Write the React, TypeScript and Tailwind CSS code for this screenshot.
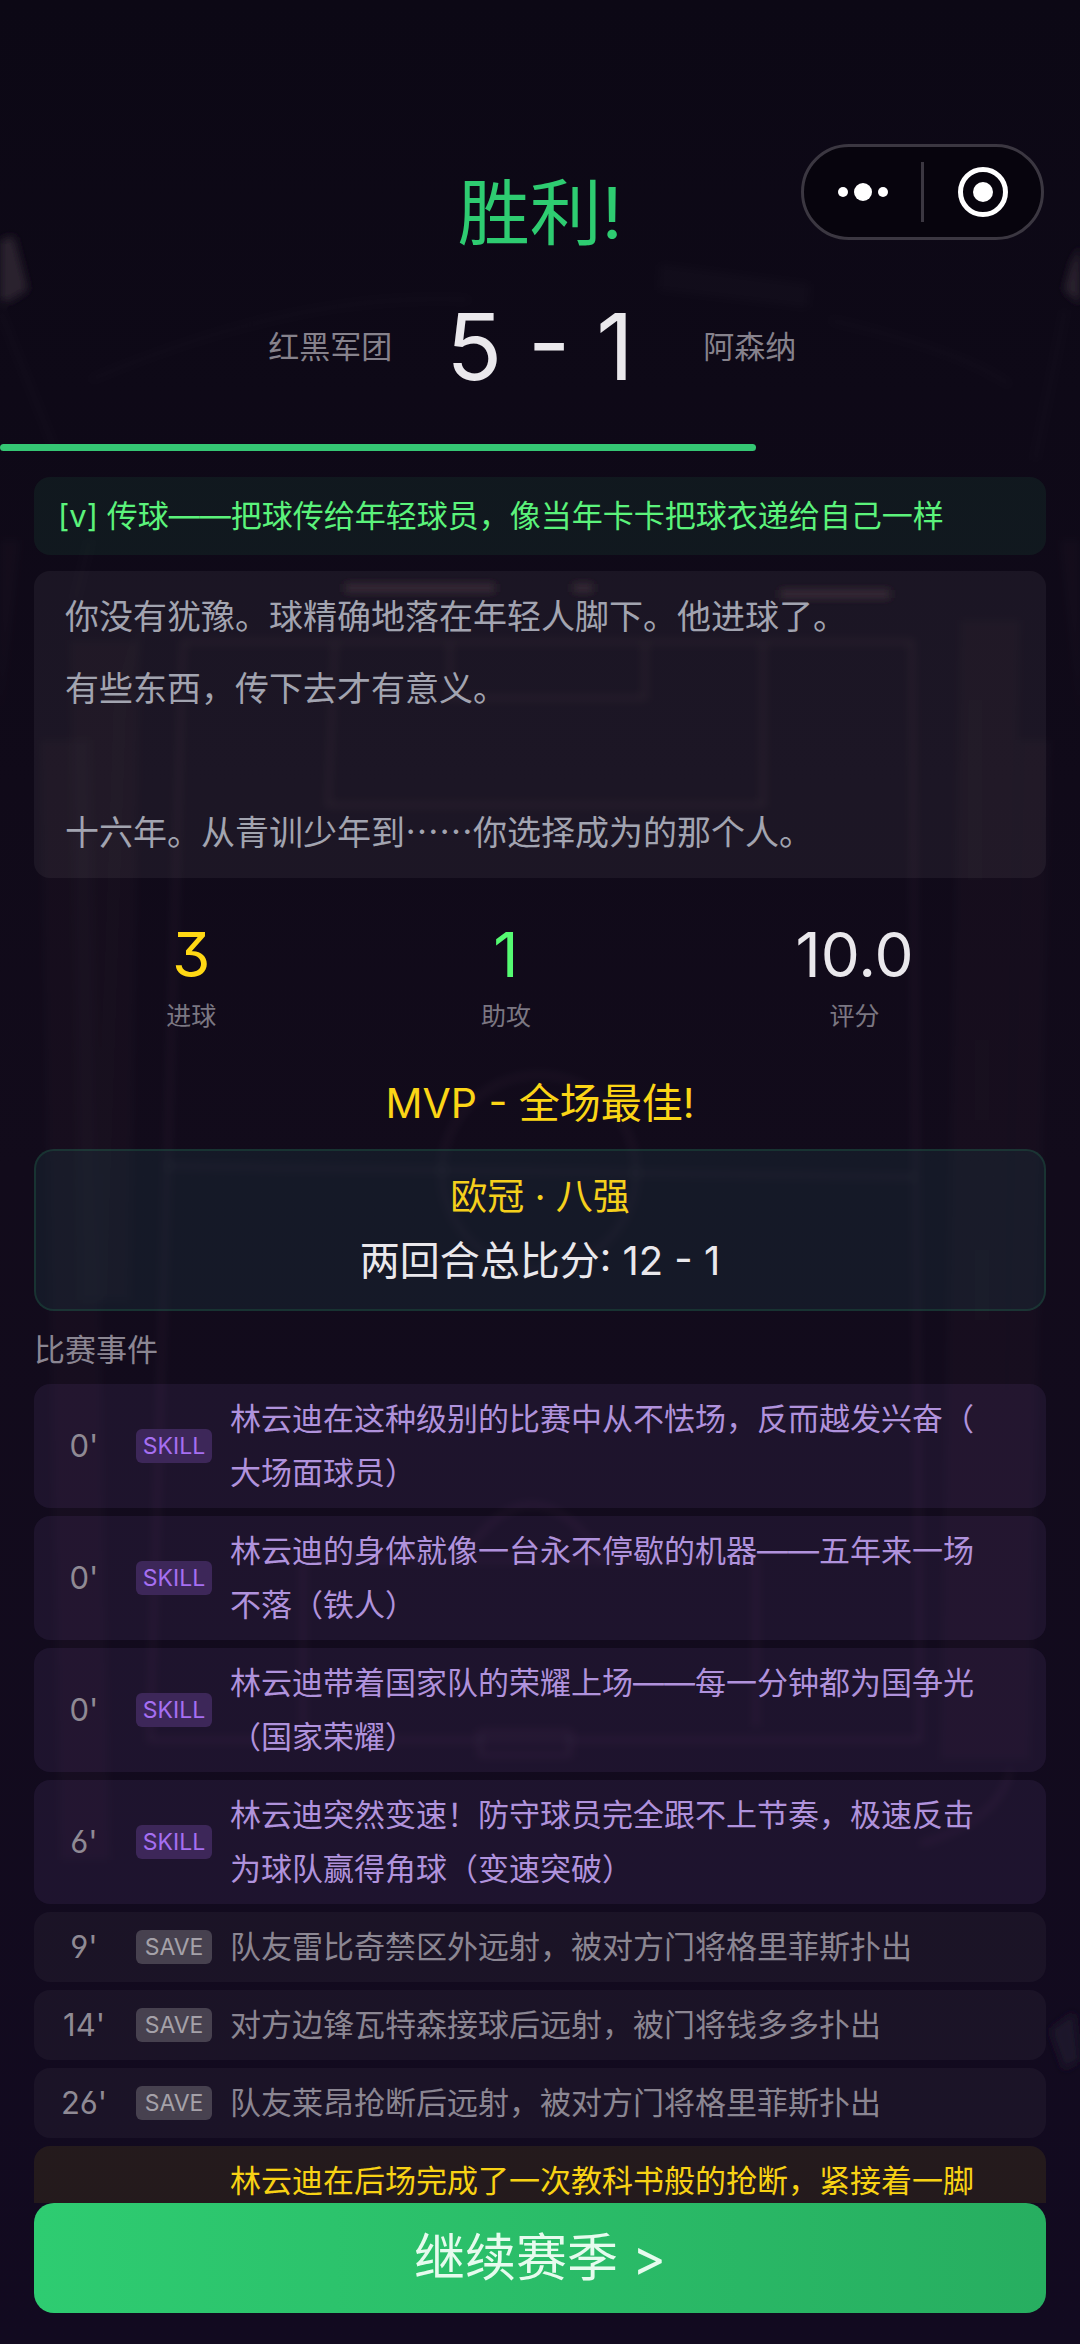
import { useMemo } from "react";
import clsx from "clsx";

type EventKind = "skill" | "save" | "goal";

interface MatchEvent {
  kind: EventKind;
  minute?: number;
  text: string;
}

const STORY = [
  "你没有犹豫。球精确地落在年轻人脚下。他进球了。",
  "有些东西，传下去才有意义。",
  "",
  "十六年。从青训少年到……你选择成为的那个人。"
];

const STATS = [
  { label: "进球", value: "3", color: "text-[#ffd814]" },
  { label: "助攻", value: "1", color: "text-[#55fb72]" },
  { label: "评分", value: "10.0", color: "text-[#eae8ec]" }
];

const EVENTS: MatchEvent[] = [
  {
    kind: "skill",
    minute: 0,
    text: "林云迪在这种级别的比赛中从不怯场，反而越发兴奋（大场面球员）"
  },
  {
    kind: "skill",
    minute: 0,
    text: "林云迪的身体就像一台永不停歇的机器——五年来一场不落（铁人）"
  },
  {
    kind: "skill",
    minute: 0,
    text: "林云迪带着国家队的荣耀上场——每一分钟都为国争光（国家荣耀）"
  },
  {
    kind: "skill",
    minute: 6,
    text: "林云迪突然变速！防守球员完全跟不上节奏，极速反击为球队赢得角球（变速突破）"
  },
  {
    kind: "save",
    minute: 9,
    text: "队友雷比奇禁区外远射，被对方门将格里菲斯扑出"
  },
  {
    kind: "save",
    minute: 14,
    text: "对方边锋瓦特森接球后远射，被门将钱多多扑出"
  },
  {
    kind: "save",
    minute: 26,
    text: "队友莱昂抢断后远射，被对方门将格里菲斯扑出"
  },
  { kind: "goal", text: "林云迪在后场完成了一次教科书般的抢断，紧接着一脚" }
];

const ROW_STYLES: Record<EventKind, string> = {
  skill: "items-center bg-[#b480f0]/8 text-[#b092dc]",
  save: "items-center bg-white/4 text-[#8b8692]",
  goal: "min-h-44 items-start bg-[#ffd700]/8 text-[#f8d214]"
};

const TAG_STYLES: Record<EventKind, string> = {
  skill: "bg-[#3d2759] text-[#a66ff2]",
  save: "bg-[#47414f] text-[#a5a1a9]",
  goal: "bg-transparent"
};

function Backdrop() {
  return (
    <svg
      className="absolute inset-0 h-full w-full"
      viewBox="0 0 1080 2344"
      preserveAspectRatio="none"
      aria-hidden="true"
    >
      <defs>
        <filter id="soft" x="-20%" y="-20%" width="140%" height="140%">
          <feGaussianBlur stdDeviation="4" />
        </filter>
      </defs>
      <g filter="url(#soft)">
        {/* stands */}
        <g fill="#c8a0b8" fillOpacity="0.025">
          <path d="M0 540 L20 540 L0 720Z" />
          <path d="M40 740 L90 740 L110 1860 L60 1860Z" />
          <path d="M70 640 L140 640 L130 1300 L80 1300Z" />
          <path d="M1060 540 L1080 540 L1080 720Z" />
          <path d="M960 620 L1020 620 L1000 1760 L940 1760Z" />
          <path d="M1020 740 L1050 740 L1030 1760 L1000 1760Z" />
        </g>
        {/* floodlights */}
        <path d="M0 240 L14 236 L28 290 L8 302 L0 300Z" fill="#2a242f" />
        <path d="M1080 246 L1072 262 L1064 290 L1080 304Z" fill="#2a242f" />
        <path
          d="M1074 2012 L1050 2030 L1064 2070 L1080 2060Z"
          fill="#1e1529"
        />
        <path
          d="M660 264 L810 284 L808 308 L658 290Z"
          fill="#fff"
          fillOpacity="0.015"
        />
        <path
          d="M345 584h150v8H345zM573 584h20v8h-20zM780 590h110v8H780z"
          fill="#33222e"
        />
        {/* roof line */}
        <g fill="none" stroke="#ffffff" strokeOpacity="0.02" strokeWidth="4">
          <path d="M90 380 Q300 290 470 300 M830 320 Q960 350 1010 385" />
          <path d="M0 310 L55 450 M1065 310 L1035 460" />
          <path d="M90 540 L75 600 M140 630 L120 700 L100 1300" />
          <path d="M975 700 V880 M982 1040 V1120 M982 1250 V1320" />
        </g>
        {/* pitch markings */}
        <g fill="none" stroke="#c8a0b8" strokeOpacity="0.06" strokeWidth="5">
          <path d="M183 642 H912 L920 1740 H150Z" />
          <path d="M335 642 L328 805 H763 V642" />
          <path d="M450 642 V698 H645 V642" />
          <path d="M165 1166 L915 1177" />
          <circle cx="539" cy="1172" r="97" />
          <path d="M303 1727 V1560 H756 V1727" />
          <path d="M462 1560 Q530 1450 605 1560" />
          <path d="M480 1732h90v23h-90z" />
          <path d="M920 1844 Q1000 1820 1010 1770" />
        </g>
      </g>
    </svg>
  );
}

function Capsule() {
  return (
    <div className="absolute top-36 right-9 flex h-24 w-[243px] items-center rounded-full border-3 border-[#3b3741] bg-[#07040d]">
      <button
        type="button"
        aria-label="更多"
        className="flex flex-1 items-center justify-center gap-1.5"
      >
        <span className="size-2.5 rounded-full bg-white" />
        <span className="size-4.5 rounded-full bg-white" />
        <span className="size-2.5 rounded-full bg-white" />
      </button>
      <span className="h-15 w-[3px] bg-[#3b3741]" />
      <button
        type="button"
        aria-label="关闭"
        className="flex flex-1 items-center justify-center"
      >
        <svg className="size-[50px]" viewBox="0 0 50 50">
          <circle
            cx="25"
            cy="25"
            r="22.5"
            fill="none"
            stroke="#fff"
            strokeWidth="5"
          />
          <circle cx="25" cy="25" r="10" fill="#fff" />
        </svg>
      </button>
    </div>
  );
}

function EventRow({ event }: { event: MatchEvent }) {
  return (
    <li
      className={clsx(
        "flex rounded-2xl py-2 pr-12 pl-4",
        ROW_STYLES[event.kind]
      )}
    >
      <span className="w-[68px] shrink-0 text-center text-[31px] text-[#8f8a94]">
        {event.minute !== undefined && `${event.minute}'`}
      </span>
      <span
        className={clsx(
          "mx-[18px] h-[34px] w-[76px] shrink-0 rounded-md text-center text-[23px] leading-[34px]",
          TAG_STYLES[event.kind]
        )}
      >
        {event.kind !== "goal" && event.kind.toUpperCase()}
      </span>
      <p className="flex-1 text-[31px] leading-[54px] [line-break:anywhere]">
        {event.text}
      </p>
    </li>
  );
}

function App() {
  const minutesPlayed = 63;
  const progress = useMemo(() => (minutesPlayed / 90) * 100, [minutesPlayed]);

  return (
    <div className="relative flex h-screen flex-col overflow-hidden bg-linear-to-b from-[#0c0815] via-[#120b1b] to-[#120a20] font-['Inter','Noto_Sans_CJK_SC',sans-serif] text-[#eae8ec] [font-feature-settings:'cv03','cv04','cv09']">
      <Backdrop />
      <header className="pointer-events-none relative pt-[165px] text-center">
        <h1 className="text-[72px] leading-[96px] text-[#2ecc71]">胜利!</h1>
        <div className="mt-[30px] flex items-center justify-center gap-9">
          <span className="w-40 text-[31px] text-[#86828c]">红黑军团</span>
          <span className="text-[92px] leading-[112px]">5 - 1</span>
          <span className="w-40 text-[31px] text-[#86828c]">阿森纳</span>
        </div>
      </header>
      <Capsule />
      <div className="relative mt-[41px] h-[7px] shrink-0">
        <div
          className="h-full rounded-full bg-[#35c774]"
          style={{ width: `${progress}%` }}
        />
      </div>

      <main className="relative mt-[26px] min-h-0 flex-1 overflow-y-auto px-[34px] [scrollbar-width:none]">
        <p className="rounded-2xl bg-[#2ecc71]/8 px-6 text-[31px] leading-[78px] text-[#5bf37b]">
          [v] 传球——把球传给年轻球员，像当年卡卡把球衣递给自己一样
        </p>
        <p className="mt-4 rounded-2xl bg-white/5 px-[31px] pt-2 pb-[11px] font-['Noto_Sans_CJK_SC',sans-serif] text-[34px] leading-[72px] whitespace-pre-line text-[#a2a4b0]">
          {STORY.join("\n")}
        </p>

        <dl className="mt-9 flex justify-around text-center">
          {STATS.map(({ label, value, color }) => (
            <div key={label} className="flex flex-col-reverse">
              <dt className="text-[25px] leading-10 text-[#7b7782]">{label}</dt>
              <dd className={clsx("text-[62px] leading-[82px]", color)}>
                {value}
              </dd>
            </div>
          ))}
        </dl>

        <p className="mt-9 text-center text-[41px] leading-[62px] text-[#fbd516]">
          MVP - 全场最佳!
        </p>

        <section className="mt-[15px] rounded-[20px] border-2 border-[#2ecc71]/15 bg-[#20444a]/25 pt-[14px] pb-4 text-center">
          <h2 className="text-[37px] leading-16 text-[#f5d01c]">
            欧冠 · 八强
          </h2>
          <p className="text-[40px] leading-16">两回合总比分: 12 - 1</p>
        </section>

        <h3 className="mt-[15px] text-[31px] leading-12 text-[#8b8692]">
          比赛事件
        </h3>
        <ul className="mt-[10px] flex flex-col gap-2">
          {EVENTS.map((event) => (
            <EventRow key={event.text} event={event} />
          ))}
        </ul>
      </main>

      <footer className="relative px-[34px] pb-[31px]">
        <button
          type="button"
          className="h-[110px] w-full rounded-[20px] bg-linear-to-r from-[#2ecc71] to-[#27ae60] text-[51px] text-[#e6fbee]"
        >
          继续赛季 &gt;
        </button>
      </footer>
    </div>
  );
}

export default App;
